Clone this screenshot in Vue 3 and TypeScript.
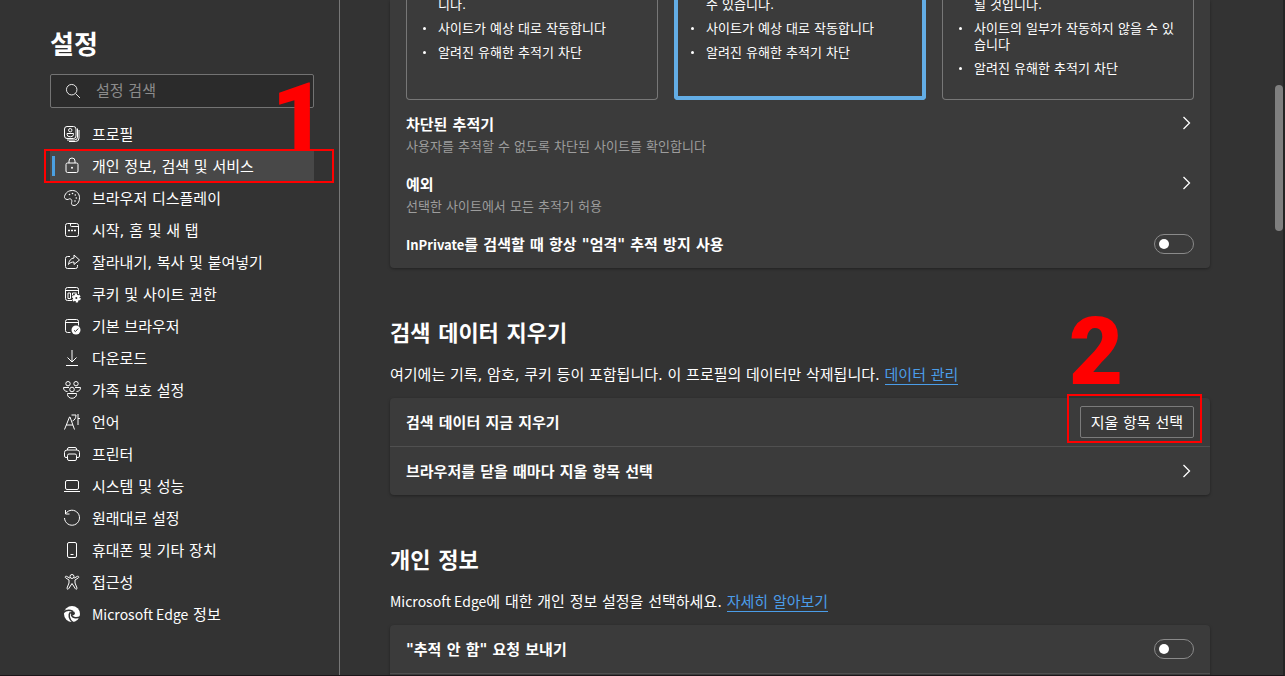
<script setup lang="ts">
import { ref } from 'vue'

interface NavItem {
  icon: string
  latin?: string
  label: string
}

const navItems: NavItem[] = [
  { icon: 'profile', label: '프로필' },
  { icon: 'lock', label: '개인 정보, 검색 및 서비스' },
  { icon: 'palette', label: '브라우저 디스플레이' },
  { icon: 'start', label: '시작, 홈 및 새 탭' },
  { icon: 'share', label: '잘라내기, 복사 및 붙여넣기' },
  { icon: 'cookies', label: '쿠키 및 사이트 권한' },
  { icon: 'default', label: '기본 브라우저' },
  { icon: 'download', label: '다운로드' },
  { icon: 'family', label: '가족 보호 설정' },
  { icon: 'language', label: '언어' },
  { icon: 'printer', label: '프린터' },
  { icon: 'system', label: '시스템 및 성능' },
  { icon: 'reset', label: '원래대로 설정' },
  { icon: 'phone', label: '휴대폰 및 기타 장치' },
  { icon: 'access', label: '접근성' },
  { icon: 'edge', latin: 'Microsoft Edge', label: ' 정보' },
]

const iconMarkup: Record<string, string> = {
  profile:
    '<rect x="0.5" y="0.5" width="11.5" height="12" rx="2.5"/><path d="M13.5 2.5v8.5a3 3 0 0 1-3 3H3M15 4v8a3.5 3.5 0 0 1-3.5 3.500H5"/><circle cx="6.250" cy="4.200" r="1.700"/><path d="M3 7.500h6.500v.8a3.250 2.500 0 0 1-6.500 0z"/>',
  lock:
    '<rect x="2" y="5" width="12" height="9.500" rx="1.500"/><path d="M5 5V3a3 3 0 0 1 6 0v2"/><circle cx="8" cy="9.700" r="1" fill="currentColor" stroke="none"/>',
  palette:
    '<path d="M.500 6.500C1.500 2.500 4.500 .500 8.500.500c4 0 7 3.200 7 7.200 0 4.300-2.500 7.800-5.500 7.800-2 0-2.900-1.400-2.400-3 .5-1.500.3-2.900-1-3.500C5 8.200 4.500 10 3 9.500 1.100 9 .200 8 .500 6.500z"/><g fill="currentColor" stroke="none"><circle cx="5.500" cy="4.500" r=".8"/><circle cx="8.500" cy="3.500" r=".8"/><circle cx="11.300" cy="5" r=".8"/><circle cx="12.300" cy="8" r=".8"/><circle cx="11" cy="11" r=".8"/></g>',
  start:
    '<rect x="1.500" y="1.500" width="13" height="13" rx="2"/><path d="M6.500 1.500v2a1 1 0 0 0 1 1h7"/><path d="M4 8.500h2M7 8.500h2M10 8.500h2" stroke-width="1.500"/>',
  share:
    '<path d="M6 2.500H3.500a2 2 0 0 0-2 2v8a2 2 0 0 0 2 2h8a2 2 0 0 0 2-2V11"/><path d="M10 1l5.500 5-5.500 4.500V8C7.500 8 6 8.700 4.500 10.500 5 6.500 7 4.200 10 4z"/>',
  cookies:
    '<path d="M8 14.500H3.500a2 2 0 0 1-2-2v-9a2 2 0 0 1 2-2h9a2 2 0 0 1 2 2V8M1.500 4.500h13M4 7h2.500v5.500H4zM8.500 9V7h4"/><circle cx="12.300" cy="12" r="3.300" fill="currentColor" stroke="none"/><circle cx="12.300" cy="12" r="3.700" fill="none" stroke-width="1.500" stroke-dasharray="2.300 1.570"/><circle cx="12.300" cy="12" r="1" fill="#333" stroke="none"/>',
  default:
    '<path d="M6.500 14.500h-3a2 2 0 0 1-2-2v-9a2 2 0 0 1 2-2h9a2 2 0 0 1 2 2v4M1.500 4.500h13"/><circle cx="12" cy="12" r="4.500" fill="currentColor" stroke="none"/><path d="M10 12.300l1.400 1.300 2.800-3" stroke="#333"/>',
  download: '<path d="M8 0v11.500M3.500 7.500L8 12l4.500-4.500M2 15.500h12"/>',
  family:
    '<circle cx="4" cy="1.700" r="2.200"/><circle cx="12" cy="1.700" r="2.200"/><circle cx="8" cy="7.500" r="2.300"/><path d="M3.500 11.500h9v1a4.500 3.800 0 0 1-9 0zM5 5.500h-5.500C-.500 8 1 9.500 3.500 9.500M11 5.500h5.500c0 2.500-1.500 4-4 4"/>',
  language:
    '<path d="M.500 15.500L5.500 3h.5l4.500 12.500M2.200 11h6.800"/><path d="M7.500 1h4.500c0 3.500-1.500 5-3.500 6M14 0v11M14 4.500h2"/>',
  printer:
    '<path d="M3.500 11.500H2a1.500 1.500 0 0 1-1.500-1.500V6.500A2.500 2.500 0 0 1 3 4h10a2.500 2.500 0 0 1 2.500 2.500V10a1.500 1.500 0 0 1-1.500 1.500h-1.500M3.500 4V3A1.500 1.500 0 0 1 5 1.500h6A1.500 1.500 0 0 1 12.500 3v1"/><rect x="3.500" y="8" width="9" height="6.500" rx="1.500"/>',
  system: '<rect x="1.500" y="2.500" width="13" height="9" rx="1.500"/><path d="M0 13.500h16"/>',
  reset: '<path d="M1.800 3.500A7.500 7.500 0 1 1 .500 8M1.500 0v4h4"/>',
  phone: '<rect x="3.500" y=".500" width="9" height="15" rx="1.500"/><path d="M6.500 12.500h3"/>',
  access:
    '<circle cx="8" cy="2.500" r="2"/><path d="M6 4.200L2.500 2.300c-1.200-.5-1.800 1-.8 1.600L5 6v3L3 14c-.300 1.200 1.200 1.700 1.700.6L8 9.500l3.300 5.100c.500 1.100 2 .6 1.700-.6L11 9V6l3.300-2.100c1-.6.400-2.100-.8-1.600L10 4.200"/>',
  edge:
    '<circle cx="8" cy="8" r="8" fill="currentColor" stroke="none"/><g fill="none" stroke="#333" stroke-width="1.500"><path d="M-.500 6.500C2 4.200 6 4 9 5.500"/><path d="M6.500 6C4 8.500 5 13.500 9 16.500"/><path d="M7.500 8.500c0 3 4.500 4.200 9 2.200"/></g><circle cx="8.800" cy="7.300" r="2.100" fill="#333" stroke="none"/>',
}

const levels = [
  { selected: false, points: ['니다.', '사이트가 예상 대로 작동합니다', '알려진 유해한 추적기 차단'] },
  { selected: true, points: ['수 있습니다.', '사이트가 예상 대로 작동합니다', '알려진 유해한 추적기 차단'] },
  { selected: false, points: ['될 것입니다.', '사이트의 일부가 작동하지 않을 수 있습니다', '알려진 유해한 추적기 차단'] },
]

const selectedNav = ref(1)
const strictInPrivate = ref(false)
const doNotTrack = ref(false)
const query = ref('')
</script>

<template>
  <div class="settings">
    <aside class="sidebar">
      <h1>설정</h1>
      <div class="search">
        <svg viewBox="0 0 16 16" class="icon"><circle cx="6.500" cy="6.500" r="6" /><path d="M11 11L16 16" /></svg>
        <input v-model="query" type="text" placeholder="설정 검색" aria-label="설정 검색" />
      </div>
      <nav>
        <div v-for="(item, i) in navItems" :key="item.icon" class="nav-row">
          <a href="#" class="nav-link" :class="{ active: i === selectedNav }" @click.prevent="selectedNav = i">
            <svg viewBox="0 0 16 16" class="icon" v-html="iconMarkup[item.icon]"></svg>
            <span class="nav-label"><span v-if="item.latin" class="latin">{{ item.latin }}</span>{{ item.label }}</span>
          </a>
          <template v-if="i === 1">
            <span class="mark mark-nav"></span>
            <span class="step step-one">1</span>
          </template>
        </div>
      </nav>
    </aside>

    <main>
      <section class="panel panel-first">
        <div class="levels">
          <div v-for="(level, i) in levels" :key="i" class="level" :class="{ chosen: level.selected }">
            <ul>
              <li v-for="(point, j) in level.points" :key="j">{{ point }}</li>
            </ul>
          </div>
        </div>
        <a href="#" class="detail-row">
          <span><strong>차단된 추적기</strong><small>사용자를 추적할 수 없도록 차단된 사이트를 확인합니다</small></span>
          <svg viewBox="0 0 16 16" class="icon chevron"><path d="M5.500 2L11.500 8L5.500 14" /></svg>
        </a>
        <a href="#" class="detail-row">
          <span><strong>예외</strong><small>선택한 사이트에서 모든 추적기 허용</small></span>
          <svg viewBox="0 0 16 16" class="icon chevron"><path d="M5.500 2L11.500 8L5.500 14" /></svg>
        </a>
        <label class="row">
          <strong><span class="latin">InPrivate</span>를 검색할 때 항상 "엄격" 추적 방지 사용</strong>
          <input v-model="strictInPrivate" type="checkbox" class="toggle" />
        </label>
      </section>

      <h2>검색 데이터 지우기</h2>
      <p>여기에는 기록, 암호, 쿠키 등이 포함됩니다. 이 프로필의 데이터만 삭제됩니다. <a href="#">데이터 관리</a></p>
      <section class="panel">
        <div class="row">
          <strong>검색 데이터 지금 지우기</strong>
          <div class="action">
            <button type="button">지울 항목 선택</button>
            <span class="mark mark-button"></span>
            <span class="step step-two">2</span>
          </div>
        </div>
        <a href="#" class="row divided">
          <strong>브라우저를 닫을 때마다 지울 항목 선택</strong>
          <svg viewBox="0 0 16 16" class="icon chevron"><path d="M5.500 2L11.500 8L5.500 14" /></svg>
        </a>
      </section>

      <h2>개인 정보</h2>
      <p><span class="latin">Microsoft Edge</span>에 대한 개인 정보 설정을 선택하세요. <a href="#">자세히 알아보기</a></p>
      <section class="panel">
        <label class="row">
          <strong>"추적 안 함" 요청 보내기</strong>
          <input v-model="doNotTrack" type="checkbox" class="toggle" />
        </label>
        <div class="row divided"></div>
      </section>
    </main>
    <div class="scroll-thumb"></div>
  </div>
</template>

<style>
body {
  margin: 0;
  background: #333;
}
</style>

<style scoped>
* {
  box-sizing: border-box;
}
.settings {
  position: relative;
  display: flex;
  height: 100vh;
  overflow: hidden;
  background: #333;
  border-right: 2px solid #242424;
  border-bottom: 1px solid #1c1519;
  color: #fff;
  font-family: "DejaVu Sans", "Noto Sans CJK KR", sans-serif;
  font-size: 15px;
  line-height: 20px;
}
.latin {
  font-family: "Noto Sans CJK KR", sans-serif;
  font-size: 14px;
  line-height: 16px;
}
strong .latin {
  font-size: 13px;
}
.icon {
  width: 16px;
  height: 16px;
  flex: none;
  overflow: visible;
  fill: none;
  stroke: currentColor;
  stroke-width: 1;
}
.chevron {
  stroke-width: 1.3;
}
a {
  color: inherit;
  text-decoration: none;
}
.sidebar {
  flex: none;
  width: 340px;
  padding: 27px 25px 0 50px;
  border-right: 1px solid #777;
}
h1 {
  margin: 0 0 11px;
  font-size: 26px;
  line-height: 36px;
}
.search {
  display: flex;
  align-items: center;
  gap: 16px;
  height: 34px;
  padding: 0 15px;
  background: #2b2b2b;
  border: 1px solid #737373;
  border-radius: 2px;
}
.search .icon {
  width: 14px;
  height: 14px;
}
.search input {
  flex: 1;
  min-width: 0;
  padding: 0;
  border: 0;
  outline: 0;
  background: none;
  color: #fff;
  font: inherit;
}
.search input::placeholder {
  color: #8c8c8c;
  opacity: 1;
}
nav {
  margin-top: 10px;
}
.nav-row {
  position: relative;
  height: 32px;
  padding: 1px 0;
}
.nav-link {
  position: relative;
  display: flex;
  align-items: center;
  gap: 12px;
  height: 30px;
  padding-left: 14px;
  white-space: nowrap;
}
.nav-label,
.row strong {
  padding-top: 2px;
}
.nav-link.active {
  background: #484848;
}
.nav-link.active::before {
  content: "";
  position: absolute;
  left: 2px;
  top: 5px;
  width: 3px;
  height: 20px;
  background: #4ba0e1;
}
.mark {
  position: absolute;
  border: 2px solid #f00;
  pointer-events: none;
}
.mark-nav {
  inset: -1px -20px -1px -6px;
}
.mark-button {
  inset: -12px -8px -5px -13px;
}
.step {
  position: absolute;
  color: #f00;
  font-family: Roboto, sans-serif;
  font-size: 94px;
  font-weight: 900;
  line-height: 96px;
  pointer-events: none;
}
.step-one {
  right: -12px;
  bottom: 16px;
}
.step-two {
  left: -11px;
  bottom: 38px;
}
main {
  flex: 1;
  min-width: 0;
  padding: 0 73px 0 50px;
}
.panel {
  background: #3b3b3b;
  border-radius: 4px;
  box-shadow: 0 1px 3px rgba(0, 0, 0, 0.35);
}
.panel-first {
  border-radius: 0 0 4px 4px;
}
.levels {
  display: flex;
  gap: 16px;
  height: 100px;
  padding: 0 16px;
}
.level {
  flex: 1;
  min-width: 0;
  border: 1px solid #777;
  border-top: 0;
  border-radius: 0 0 4px 4px;
  padding: 0 15px;
}
.level.chosen {
  border-width: 0 4px 4px;
  border-color: #63ade5;
  padding: 0 12px;
}
ul {
  margin: -3px 0 0;
  padding: 0;
  list-style: none;
}
li {
  position: relative;
  margin-bottom: 8px;
  padding-left: 16px;
  font-size: 13px;
  line-height: 16px;
  word-break: break-all;
}
li:not(:first-child)::before {
  content: "";
  position: absolute;
  left: 1px;
  top: 6px;
  width: 3px;
  height: 3px;
  border-radius: 50%;
  background: #fff;
}
.detail-row {
  display: flex;
  justify-content: space-between;
  padding: 15px 16px 1px;
}
.detail-row strong,
.detail-row small {
  display: block;
}
.detail-row small {
  color: #9d9d9d;
  font-size: 13px;
  line-height: 24px;
}
.row {
  display: flex;
  align-items: center;
  justify-content: space-between;
  height: 48px;
  padding: 0 16px;
}
.divided {
  height: 49px;
  border-top: 1px solid #505050;
}
h2 {
  margin: 50px 0 13px;
  font-size: 22px;
  line-height: 32px;
}
p {
  margin: 0 0 11px;
  line-height: 24px;
}
p a {
  color: #4b9de8;
  border-bottom: 1px solid #4b9de8;
}
.toggle {
  appearance: none;
  display: flex;
  align-items: center;
  width: 40px;
  height: 20px;
  margin: 0;
  padding: 0 4px;
  border: 1px solid #8a8a8a;
  border-radius: 10px;
}
.toggle::before {
  content: "";
  width: 10px;
  height: 10px;
  border-radius: 50%;
  background: #fff;
}
.toggle:checked {
  justify-content: flex-end;
  background: #4b9de8;
}
.action {
  position: relative;
}
button {
  display: block;
  height: 32px;
  padding: 2px 10px 0;
  background: #3b3b3b;
  border: 1px solid #7b7b7b;
  border-radius: 2px;
  color: #fff;
  font: inherit;
  white-space: nowrap;
}
.scroll-thumb {
  position: absolute;
  top: 85px;
  right: 0;
  width: 8px;
  height: 146px;
  border-radius: 4px;
  background: #7f7f7f;
}
</style>
